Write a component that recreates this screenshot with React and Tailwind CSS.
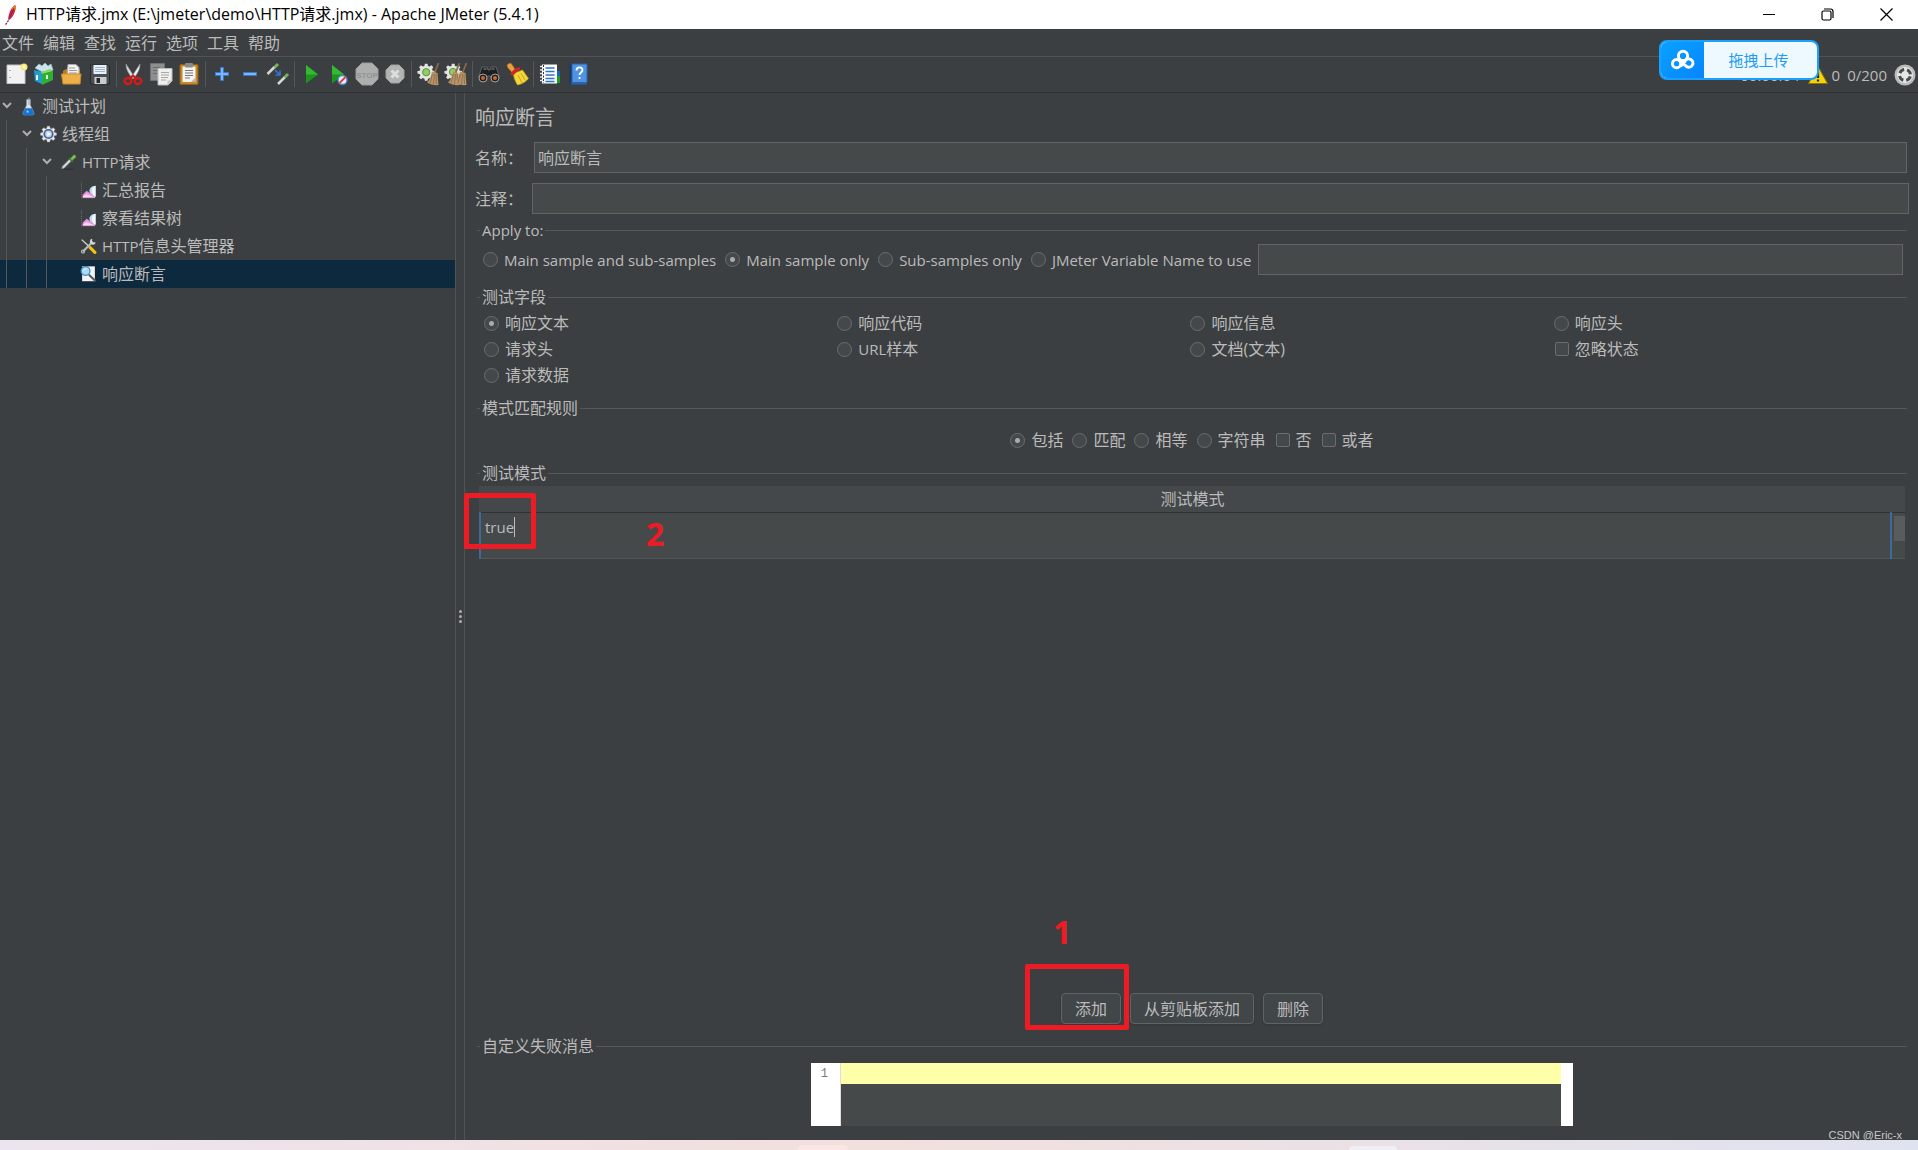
import React, { useState } from "react";

// Toolbar drawings, all on a 24x24 grid
const GEAR =
  "M10.4 2h3.2l.5 2.6 1.9.8 2.2-1.5 2.2 2.3-1.5 2.1.8 1.9 2.6.5v2.8l-2.6.5-.8 1.9 1.5 2.2-2.2 2.2-2.2-1.5-1.9.8-.5 2.6h-3.2l-.5-2.6-1.9-.8-2.2 1.5-2.2-2.2 1.5-2.2-.8-1.9-2.6-.5v-2.8l2.6-.5.8-1.9-1.5-2.1 2.2-2.3L8 5.400l1.900-.8z";

const Broom = ({ x = 0 }) => (
  <g transform={`translate(${x} 0)`}>
    <path d="M20.500 1l-4 10" stroke="#8a6a48" strokeWidth="1.800" />
    <path d="M14 9.500l5.500 1.500 1 12c-4 .5-8.500-.5-11.500-2.500 3-3 4-6.500 5-11z" fill="#b99468" />
    <path d="M14.500 12l-2.500 9M16.500 12l-1 10.500M18 12l.5 10" stroke="#8a6844" strokeWidth=".8" />
  </g>
);

const Pipette = ({ size = 24 }) => (
  <svg width={size} height={size} viewBox="0 0 24 24" fill="none">
    <ellipse cx="10" cy="22" rx="9" ry="1" fill="#2c2e30" />
    <path d="M2.500 21.500l1-3.500L14 7.500l2.500 2.500L6 20.500z" fill="#d7dad7" stroke="#8b908c" />
    <path d="M12 6l6 6" stroke="#3c6e34" strokeWidth="2" />
    <path d="M14.500 7.500l4.500-5c1.800-1.500 4.500 1 3 3l-5 4.500z" fill="#7cc25c" stroke="#4f8f3c" />
  </svg>
);

const icons = {
  new: (
    <>
      <path d="M3 3h18v18.500H3z" fill="#f2f2f2" stroke="#c4c4c4" />
      <path d="M6 8v1M6 15v1" stroke="#999" strokeWidth="1.500" />
      <circle cx="20" cy="5" r="3.500" fill="#f5e878" />
      <circle cx="20" cy="5" r="1.500" fill="#fffbd0" />
    </>
  ),
  templates: (
    <>
      <path d="M3 6l4-4 3 2 3-3 3 3 3-2 2 6-9 3z" fill="#cfe3ea" stroke="#8fb2c0" />
      <path d="M2 8l8 2v12l-7-3z" fill="#1e9fd0" />
      <path d="M5 13v5" stroke="#dff2fa" strokeWidth="2" />
      <path d="M10 12l11-3v9l-11 5z" fill="#2fae35" />
      <path d="M10 12l11-3-3-2-9 3z" fill="#7ddc5c" />
      <path d="M15 13v4" stroke="#d6ffd0" strokeWidth="2" />
    </>
  ),
  open: (
    <>
      <path d="M3 9l3-2h14v14H3z" fill="#b97c1c" />
      <path d="M8 2.500h8l3 3V14H7z" fill="#f2f2f2" stroke="#aaa" />
      <path d="M9 6h6M9 8.500h8M9 11h8" stroke="#999" />
      <path d="M1.500 12h19.500l-1 10H3z" fill="#eeb14a" stroke="#c98d28" />
    </>
  ),
  save: (
    <>
      <path d="M2.500 3h18l1 1v18h-19z" fill="#4b4e54" stroke="#26282b" />
      <path d="M5.500 3h13v9h-13z" fill="#e8f0f8" />
      <path d="M7 5.500h10M7 7.500h10M7 9.500h10" stroke="#9fb6cd" />
      <path d="M6.500 15h12v7h-12z" fill="#c9cccf" />
      <path d="M8.500 16h3.500v5H8.500z" fill="#26282b" />
    </>
  ),
  cut: (
    <>
      <path d="M5 2l8.500 13-2 1.500C8 12 5 8 5 2z" fill="#d8dadc" stroke="#909396" strokeWidth=".6" />
      <path d="M19 2l-8.500 13 2 1.500C16 12 19 8 19 2z" fill="#f0f1f2" stroke="#909396" strokeWidth=".6" />
      <ellipse cx="7" cy="19" rx="3.300" ry="3" stroke="#d41a1a" strokeWidth="2.400" />
      <ellipse cx="17" cy="19" rx="3.300" ry="3" stroke="#d41a1a" strokeWidth="2.400" />
      <path d="M9 16.500l3-3 3 3" stroke="#d41a1a" strokeWidth="2.200" />
    </>
  ),
  copy: (
    <>
      <path d="M1.500 1.500h14v17h-14z" fill="#8c8f90" stroke="#6e7172" />
      <path d="M4 5.500h7M4 8.500h5M4 11.500h4" stroke="#6a6d6e" />
      <path d="M9 6.500h14V19l-4 4H9z" fill="#efefee" stroke="#bbb" />
      <path d="M12 10.500h8M12 13h8M12 15.500h7M12 18h5" stroke="#a7a7a7" />
      <path d="M23 18.500h-4.500V23z" fill="#c5c5c5" />
    </>
  ),
  paste: (
    <>
      <rect x="3" y="2.500" width="18" height="20" rx="1" fill="#c98828" stroke="#8f5e14" />
      <path d="M5.500 4.500h13V20h-13z" fill="#f3f3f2" />
      <rect x="8" y="1" width="8" height="4.500" rx="1" fill="#8a8c88" />
      <path d="M8 8.500h8M8 11h8M8 13.500h8M8 16h5" stroke="#777" />
      <path d="M18.500 15.500V20H14z" fill="#b5b5b5" />
    </>
  ),
  plus: <path d="M10.500 5.500h3v5h5v3h-5v5h-3v-5h-5v-3h5z" fill="#7db4f5" stroke="#3a78cc" />,
  minus: <path d="M5.500 10.500h13v3h-13z" fill="#7db4f5" stroke="#3a78cc" />,
  toggle: (
    <>
      <path d="M1.500 12l7-7" stroke="#d4d7d4" strokeWidth="2.500" />
      <path d="M8.500 5.500L12 2" stroke="#78b060" strokeWidth="3" />
      <path d="M12 22l7-7" stroke="#d4d7d4" strokeWidth="2.500" />
      <path d="M18.500 15.500L22 12" stroke="#78b060" strokeWidth="3" />
      <path d="M9 8l4.500 4.500M14 8.500V13H9.500" stroke="#2f78d8" strokeWidth="1.500" />
    </>
  ),
  start: (
    <>
      <path d="M7 3l12 9.500L7 21.500z" fill="#1a961a" />
      <path d="M7 3l12 9.500H7z" fill="#35b835" />
    </>
  ),
  startNoPause: (
    <>
      <path d="M5 3l12 9.500L5 21.500z" fill="#1a961a" />
      <path d="M5 3l12 9.500H5z" fill="#35b835" />
      <circle cx="15.500" cy="18" r="4.500" fill="#e8eef8" stroke="#4b83cc" strokeWidth="1.300" />
      <path d="M12.500 21l6-6" stroke="#dd3c3c" strokeWidth="1.800" />
    </>
  ),
  stop: (
    <>
      <path d="M7 1h10l6 6v10l-6 6H7l-6-6V7z" fill="#adafaf" stroke="#9a9c9c" />
      <text x="12" y="15.500" textAnchor="middle" fontSize="8" fontWeight="bold" fill="#929494" fontFamily="Liberation Sans, sans-serif">
        STOP
      </text>
    </>
  ),
  shutdown: (
    <>
      <path d="M8 3h8l5 5v8l-5 5H8l-5-5V8z" fill="#b2b4b4" stroke="#9fa1a1" />
      <path d="M8.500 8.500l7 7M15.500 8.500l-7 7" stroke="#dcdede" strokeWidth="3" />
    </>
  ),
  clear: (
    <>
      <path d={GEAR} fill="#e3e5e3" transform="translate(0 0) scale(.85)" />
      <circle cx="10.200" cy="10.200" r="3.600" fill="#8fd05a" stroke="#5f8c46" />
      <Broom x={2} />
    </>
  ),
  clearAll: (
    <>
      <path d={GEAR} fill="#e3e5e3" transform="translate(-1 0) scale(.85)" />
      <circle cx="9" cy="10" r="3.600" fill="#8fd05a" stroke="#5f8c46" />
      <Broom x={-5} />
      <Broom x={2} />
    </>
  ),
  search: (
    <>
      <path d="M5 5h5l1 3h2l1-3h5l3.500 10-4 4h-4l-1-5h-3l-1 5h-4l-4-4z" fill="#1e1f20" stroke="#6a6d70" strokeWidth=".8" />
      <path d="M6.500 7h3M14.500 7h3" stroke="#8e9194" />
      <circle cx="6" cy="16" r="4" fill="#2b1c14" stroke="#a0a3a6" />
      <circle cx="6" cy="16" r="2" fill="#c36a35" />
      <circle cx="18" cy="16" r="4" fill="#2b1c14" stroke="#a0a3a6" />
      <circle cx="18" cy="16" r="2" fill="#c36a35" />
    </>
  ),
  resetSearch: (
    <>
      <path d="M2 3.500C3 1 6 .5 7 2.500l4 6-3.500 2.500-4.500-5z" fill="#e8a13c" stroke="#a8661a" strokeWidth=".7" />
      <path d="M11 10.500l6.500-2.500 6 8.500c-2.500 3-6 5.500-11 6.500-2-3-3.500-7-4-10z" fill="#f5d636" stroke="#c39c18" strokeWidth=".7" />
      <path d="M13 13l4 8M16 11.500l4.500 7" stroke="#c9a420" />
      <path d="M6.500 13c2-3.500 5-6 8.500-6.500" stroke="#d62222" strokeWidth="3.200" />
    </>
  ),
  log: (
    <>
      <path d="M18 9h4v5h-4z" fill="#1462c9" />
      <path d="M18 14h4v7h-4z" fill="#1aa01a" />
      <path d="M4 2.500h15v19H4z" fill="#fcfcfc" />
      <path d="M7.500 6h9M7.500 9.500h9M7.500 13h9M7.500 16.500h9M7.500 19.500h9" stroke="#2d74c8" strokeWidth="1.300" />
      <path d="M2 4.500h4M2 8h4M2 11.500h4M2 15h4M2 18.500h4" stroke="#e6e6e6" strokeWidth="1.500" />
      <path d="M5.500 3v18" stroke="#333" strokeDasharray="2 1.500" />
    </>
  ),
  help: (
    <>
      <path d="M3.500 2.500h3v20h-3z" fill="#16386e" />
      <path d="M6 2h15v18.500H6z" fill="#4f93e3" stroke="#2c62ad" />
      <path d="M5 20.500h15.500v2H5z" fill="#2c62ad" />
      <path d="M10.500 8.500c0-4 6-4 6-.5 0 2.500-3 2.500-3 5M13.500 15v2" stroke="#fff" strokeWidth="1.800" />
    </>
  )
};

const toolGroups = [
  [["new", "新建"], ["templates", "模板"], ["open", "打开"], ["save", "保存"]],
  [["cut", "剪切"], ["copy", "复制"], ["paste", "粘贴"]],
  [["plus", "展开"], ["minus", "折叠"], ["toggle", "切换"]],
  [["start", "启动"], ["startNoPause", "不停顿开始"], ["stop", "停止"], ["shutdown", "关闭"]],
  [["clear", "清除"], ["clearAll", "清除全部"]],
  [["search", "查找"], ["resetSearch", "重置搜索"]],
  [["log", "函数助手"], ["help", "帮助"]]
];

const Flask = () => (
  <svg width="18" height="20" viewBox="0 0 18 20" fill="none">
    <path d="M7 3h4v6l4 9c0 1-1 1.500-2 1.500H5c-1 0-2-.5-2-1.500l4-9z" fill="#dce6ee" stroke="#8d9aa5" strokeWidth=".7" />
    <path d="M5.500 12.500h7l2.500 5.500c0 1-1 1.500-2 1.500H5c-1 0-2-.5-2-1.500z" fill="#1673d8" />
    <path d="M9.500 1v8" stroke="#9aa4ac" />
    <circle cx="8" cy="16" r="1.200" fill="#9ad0ff" />
  </svg>
);

const ThreadGear = () => (
  <svg width="20" height="20" viewBox="1 1 22 22" fill="none">
    <path d={GEAR} fill="#e9e9ea" stroke="#b4b6b8" strokeWidth=".6" />
    <circle cx="12" cy="12" r="5.500" fill="#bcd0ee" stroke="#3f5f98" strokeWidth="2.200" />
    <path d="M10.500 9l5 3-5 3z" fill="#fff" />
  </svg>
);

const Chart = () => (
  <svg width="18" height="18" viewBox="0 0 18 18" fill="none">
    <path d="M1.500 1v16M1 17.500h16" stroke="#74777a" strokeDasharray="1 1" />
    <path d="M10 10c0-3 2-5 6.500-5.500v12H12z" fill="#b9dcf7" />
    <path d="M13 8c1-2 2-3 3.500-3.500V16c-3 0-4-4-3.500-8z" fill="#f4faff" />
    <path d="M3 17v-3l4-4 3 2 3 2 3 3z" fill="#ee9adf" stroke="#d87acb" strokeWidth=".5" />
    <path d="M3 17v-1.500l4-2 9 3.500z" fill="#ffd7f6" />
  </svg>
);

const Tools = () => (
  <svg width="20" height="20" viewBox="0 0 20 20" fill="none">
    <path d="M2 2.500l9 8.500" stroke="#d2d4d5" strokeWidth="1.600" />
    <path d="M12 12l5.500 5.500" stroke="#f1c40f" strokeWidth="3.600" strokeLinecap="round" />
    <path d="M3.500 16.500L15 5" stroke="#b9bcbd" strokeWidth="2.400" />
    <path d="M14.500 1.500a3.500 3.500 0 1 0 4 4l-2.500.5-2-2z" fill="#d2d4d5" />
    <circle cx="3.500" cy="16.500" r="1.800" stroke="#b9bcbd" strokeWidth="1.400" />
  </svg>
);

const Magnifier = () => (
  <svg width="20" height="20" viewBox="0 0 20 20" fill="none">
    <path d="M2.500 1h15v17.500h-15z" fill="#f4f4f4" />
    <path d="M10.500 11l8 7.500" stroke="#55585a" strokeWidth="2.400" />
    <circle cx="6.500" cy="6.500" r="5.200" fill="#a5dcf8" stroke="#3e86b5" strokeWidth="1.400" />
    <path d="M4 6c.5-1.500 2-2 3.500-2" stroke="#fff" />
  </svg>
);

const Http = () => <span className="text-[15px]">HTTP</span>;

const tree = [
  { depth: 0, open: true, icon: <Flask />, label: "测试计划" },
  { depth: 1, open: true, icon: <ThreadGear />, label: "线程组" },
  { depth: 2, open: true, icon: <Pipette size={20} />, label: <><Http />请求</> },
  { depth: 3, icon: <Chart />, label: "汇总报告" },
  { depth: 3, icon: <Chart />, label: "察看结果树" },
  { depth: 3, icon: <Tools />, label: <><Http />信息头管理器</> },
  { depth: 3, icon: <Magnifier />, label: "响应断言", selected: true }
];

function TitleBar() {
  return (
    <header className="flex h-[29px] items-center justify-between bg-white pl-[3px] text-black">
      <div className="flex items-center gap-[9px]">
        <svg width="14" height="22" viewBox="0 0 14 22" fill="none">
          <path d="M12 1c1.500 1 .5 6-1.500 10-1 2-3 4-5 5.500C4.500 13 7 4 12 1z" fill="#d0253c" />
          <path d="M12 1c1.500 1 1 3 .3 5L8.500 5C9.500 3 10.500 2 12 1z" fill="#f08020" />
          <path d="M5.500 16.500L2 21.500" stroke="#6b2a7c" strokeWidth="1.300" strokeDasharray="2 1" />
          <path d="M11 4L6 15" stroke="#7a2668" />
        </svg>
        <h1 className="pb-[2px] text-base">HTTP请求.jmx (E:\jmeter\demo\HTTP请求.jmx) - Apache JMeter (5.4.1)</h1>
      </div>
      <div className="flex pr-[2px]">
        <button aria-label="最小化" className="flex h-[28px] w-[58px] items-center justify-center">
          <svg width="13" height="13" viewBox="0 0 13 13" stroke="#000"><path d="M0 6.500h12" /></svg>
        </button>
        <button aria-label="还原" className="flex h-[28px] w-[58px] items-center justify-center">
          <svg width="13" height="13" viewBox="0 0 13 13" fill="none" stroke="#000" strokeWidth="1.200">
            <rect x="1" y="3" width="9" height="9" rx="1.500" />
            <path d="M3 1h6.500c1.500 0 2.500 1 2.500 2.500V10" />
          </svg>
        </button>
        <button aria-label="关闭" className="flex h-[28px] w-[60px] items-center justify-center">
          <svg width="13" height="13" viewBox="0 0 13 13" fill="none" stroke="#000" strokeWidth="1.200">
            <path d="M.5.5l12 12M12.500.5l-12 12" />
          </svg>
        </button>
      </div>
    </header>
  );
}

function Toolbar() {
  return (
    <div className="relative flex h-9 items-center justify-between border-b border-[#2f3234] pl-[2px] pr-[2px]">
      <div className="flex items-center pb-[2px]">
        {toolGroups.map((group, i) => (
          <React.Fragment key={i}>
            {i > 0 && <span className="mx-[2px] h-[26px] w-px bg-[#555759]" />}
            {group.map(([name, label]) => (
              <button key={name} aria-label={label} className="flex h-8 w-7 items-center justify-center">
                <svg width="24" height="24" viewBox="0 0 24 24" fill="none">{icons[name]}</svg>
              </button>
            ))}
          </React.Fragment>
        ))}
      </div>
      <div className="flex items-center gap-[7px] text-[15px]">
        <span>00:00:04</span>
        <svg width="22" height="20" viewBox="0 0 22 20" fill="none">
          <path d="M11 1.500l9.500 17h-19z" fill="#f5d20a" stroke="#8a7608" />
          <path d="M11 7v6M11 14.500v2" stroke="#222" strokeWidth="2.200" />
        </svg>
        <span className="-ml-1">0</span>
        <span>0/200</span>
        <svg width="22" height="22" viewBox="0 0 22 22" fill="none">
          <circle cx="11" cy="11" r="10.500" fill="#b9bbbc" />
          <circle cx="11" cy="11" r="8" fill="#e4e5e5" />
          <circle cx="11" cy="11" r="5.500" stroke="#4a4c4d" strokeWidth="3" strokeDasharray="5.600 3.040" strokeDashoffset="-1.500" />
        </svg>
      </div>
      {/* Floating upload widget */}
      <button className="absolute right-[99px] -top-[17px] flex h-10 w-40 overflow-hidden rounded-lg border-2 border-[#1aa0ff] bg-[#eef8ff] text-[15px] text-[#1e9cf5]">
        <span className="flex h-full w-[43px] items-center justify-center bg-linear-to-br from-[#0ba2ff] to-[#0a84ff]">
          <svg width="26" height="22" viewBox="0 0 28 24" fill="none" stroke="#fff" strokeWidth="3.200">
            <circle cx="14" cy="7.500" r="5" />
            <circle cx="7" cy="16" r="4.500" />
            <path d="M10 12.500l8.500 7a4.500 4.500 0 1 0-2-6.500l-5 6" />
          </svg>
        </span>
        <span className="flex h-full flex-1 items-center justify-center pr-1">拖拽上传</span>
      </button>
    </div>
  );
}

function TreeRow({ node }) {
  return (
    <li className={`flex h-7 items-center ${node.selected ? "bg-[#0d293e]" : ""}`}>
      {Array.from({ length: node.depth }, (_, i) => (
        <span key={i} className="flex h-full w-5 shrink-0 pl-[6px]">
          <span className="w-px bg-[#55585a]" />
        </span>
      ))}
      <span className="flex w-5 shrink-0 pl-[2px]">
        {node.open && (
          <svg width="10" height="10" viewBox="0 0 10 10" fill="none" stroke="#adadad" strokeWidth="2">
            <path d="M1 2l4 4 4-4" />
          </svg>
        )}
      </span>
      <span className="flex w-[22px] shrink-0 justify-center pr-[5px]">{node.icon}</span>
      <span className="whitespace-nowrap">{node.label}</span>
    </li>
  );
}

function Radio({ name, value, selected, onSelect, children }) {
  return (
    <label className="flex items-center gap-[6px] whitespace-nowrap">
      <input
        type="radio"
        name={name}
        value={value}
        checked={selected === value}
        onChange={() => onSelect(value)}
        className="h-[15px] w-[15px] shrink-0 appearance-none rounded-full border border-[#6b6d6e] bg-[#43494a] checked:bg-[radial-gradient(circle,#aaaaaa_2px,#43494a_3px)]"
      />
      {children}
    </label>
  );
}

function Checkbox({ children }) {
  return (
    <label className="flex items-center gap-[6px] whitespace-nowrap">
      <input
        type="checkbox"
        className="ml-px h-[14px] w-[14px] shrink-0 appearance-none rounded-xs border border-[#6b6d6e] bg-[#43494a] checked:bg-[#aaaaaa]"
      />
      {children}
    </label>
  );
}

function Group({ title, className, children }) {
  return (
    <fieldset className={`border-t border-[#555759] ${className}`}>
      <legend className="ml-[3px] px-[2px] leading-[22px]">{title}</legend>
      {children}
    </fieldset>
  );
}

const inputClass = "h-[31px] min-w-0 flex-1 border border-[#646464] bg-[#45494a] px-[3px] pb-px outline-none";
const buttonClass = "h-[31px] rounded-sm border border-[#616465] bg-[#414648] px-[13px] shadow-sm";

export default function App() {
  const [name, setName] = useState("响应断言");
  const [scope, setScope] = useState("main");
  const [field, setField] = useState("text");
  const [rule, setRule] = useState("contains");
  const [pattern, setPattern] = useState("true");

  return (
    <div className="flex min-h-screen flex-col bg-[#3c3f41] font-['Open_Sans','Noto_Sans_CJK_SC',sans-serif] text-base leading-[22px] text-[#bbbbbb]">
      <TitleBar />
      <nav className="flex h-[28px] items-center gap-[9px] border-b border-[#515355] pl-[2px]">
        {["文件", "编辑", "查找", "运行", "选项", "工具", "帮助"].map((item) => (
          <button key={item}>{item}</button>
        ))}
      </nav>
      <Toolbar />

      <main className="flex flex-1">
        <aside className="w-[456px] shrink-0 border-r border-[#515355]">
          <ul className="-mt-px">
            {tree.map((node, i) => (
              <TreeRow key={i} node={node} />
            ))}
          </ul>
        </aside>
        <div className="flex w-[9px] shrink-0 flex-col items-center justify-center gap-[2px] border-r border-[#515355]">
          <span className="h-[3px] w-[3px] rounded-full bg-[#adadad]" />
          <span className="h-[3px] w-[3px] rounded-full bg-[#adadad]" />
          <span className="h-[3px] w-[3px] rounded-full bg-[#adadad]" />
        </div>

        <section className="flex min-w-0 flex-1 flex-col pb-[14px] pl-[10px] pr-[9px] pt-[11px]">
          <h2 className="text-xl leading-[28px]">响应断言</h2>
          <div className="mt-[10px] flex items-center pr-[2px]">
            <label htmlFor="name" className="w-[59px]">名称：</label>
            <input id="name" value={name} onChange={(e) => setName(e.target.value)} className={inputClass} />
          </div>
          <div className="mt-[10px] flex items-center">
            <label htmlFor="comment" className="w-[57px]">注释：</label>
            <input id="comment" className={inputClass} />
          </div>

          <div className="flex flex-1 flex-col pl-[2px] pr-[2px] pt-[5px]">
            <Group title={<span className="text-[15px]">Apply to:</span>} className="pb-[11px] pt-[3px]">
              <div className="flex items-center gap-[9px] pl-[6px] pr-1 text-[15px]">
                <Radio name="scope" value="all" selected={scope} onSelect={setScope}>Main sample and sub-samples</Radio>
                <Radio name="scope" value="main" selected={scope} onSelect={setScope}>Main sample only</Radio>
                <Radio name="scope" value="sub" selected={scope} onSelect={setScope}>Sub-samples only</Radio>
                <div className="flex flex-1 items-center gap-[7px]">
                  <Radio name="scope" value="variable" selected={scope} onSelect={setScope}>JMeter Variable Name to use</Radio>
                  <input aria-label="JMeter Variable Name" className={inputClass} />
                </div>
              </div>
            </Group>

            <Group title="测试字段" className="pb-[9px] pt-[2px]">
              <div className="grid auto-rows-[26px] grid-cols-[353fr_353fr_363fr_353fr] pl-[7px]">
                <Radio name="field" value="text" selected={field} onSelect={setField}>响应文本</Radio>
                <Radio name="field" value="code" selected={field} onSelect={setField}>响应代码</Radio>
                <Radio name="field" value="message" selected={field} onSelect={setField}>响应信息</Radio>
                <Radio name="field" value="headers" selected={field} onSelect={setField}>响应头</Radio>
                <Radio name="field" value="requestHeaders" selected={field} onSelect={setField}>请求头</Radio>
                <Radio name="field" value="url" selected={field} onSelect={setField}><span><span className="text-[15px]">URL</span>样本</span></Radio>
                <Radio name="field" value="document" selected={field} onSelect={setField}>文档(文本)</Radio>
                <Checkbox>忽略状态</Checkbox>
                <Radio name="field" value="requestData" selected={field} onSelect={setField}>请求数据</Radio>
              </div>
            </Group>

            <Group title="模式匹配规则" className="pb-[11px] pt-[10px]">
              <div className="flex justify-center gap-[9px]">
                <Radio name="rule" value="contains" selected={rule} onSelect={setRule}>包括</Radio>
                <Radio name="rule" value="matches" selected={rule} onSelect={setRule}>匹配</Radio>
                <Radio name="rule" value="equals" selected={rule} onSelect={setRule}>相等</Radio>
                <Radio name="rule" value="substring" selected={rule} onSelect={setRule}>字符串</Radio>
                <Checkbox>否</Checkbox>
                <Checkbox>或者</Checkbox>
              </div>
            </Group>

            <Group title="测试模式" className="flex flex-1 flex-col pb-[11px] pt-[2px]">
              <div className="relative pl-[2px] pr-[2px]">
                <table className="w-full border-b border-[#515658] bg-[#45494a]">
                  <thead>
                    <tr className="h-[26px] border-b border-[#2f3234] bg-[#44484a]">
                      <th colSpan="2" className="p-0 font-normal">测试模式</th>
                    </tr>
                  </thead>
                  <tbody>
                    <tr className="h-[46px]">
                      <td className="border-x-2 border-[#3d6a9b] p-0 pb-4 pl-1">
                        <div className="flex items-center">
                          <input
                            aria-label="测试模式"
                            value={pattern}
                            onChange={(e) => setPattern(e.target.value)}
                            className="field-sizing-content text-[15px] outline-none"
                          />
                          <span className="h-5 w-px bg-[#bbbbbb]" />
                        </div>
                      </td>
                      <td className="w-[14px] p-0 pl-[2px] align-top">
                        <div className="mt-[3px] h-[25px] bg-[#595b5d]" />
                      </td>
                    </tr>
                  </tbody>
                </table>
                {/* Step 2 marker */}
                <div className="absolute -left-[13px] top-[7px] h-[56px] w-[72px] rounded-xs border-[5px] border-[#ed1c24]" />
                <span className="absolute left-[169px] top-[31px] text-[32px] font-bold leading-[34px] text-[#ed1c24]">2</span>
              </div>
              <div className="mt-auto flex justify-center gap-[9px]">
                <div className="relative">
                  <button className={buttonClass}>添加</button>
                  {/* Step 1 marker */}
                  <div className="absolute -left-9 -top-[29px] h-[66px] w-[104px] rounded-xs border-[5px] border-[#ed1c24]" />
                  <span className="absolute -left-[8px] -top-[78px] text-[32px] font-bold leading-[34px] text-[#ed1c24]">1</span>
                </div>
                <button className={buttonClass}>从剪贴板添加</button>
                <button className={buttonClass}>删除</button>
              </div>
            </Group>

            <Group title="自定义失败消息" className="pt-[6px]">
              <div className="mx-auto flex h-[63px] w-[762px] border-r-[12px] border-white">
                <div className="w-[30px] border-r border-[#dddddd] bg-white pr-3 text-right font-['Liberation_Mono',monospace] text-xs leading-[22px] text-[#787878]">1</div>
                <textarea
                  aria-label="自定义失败消息"
                  className="h-full min-w-0 flex-1 resize-none bg-[linear-gradient(#ffffaa_21px,#45494a_21px)] px-1 text-black outline-none"
                />
              </div>
            </Group>
          </div>
        </section>
      </main>

      {/* Desktop strip under the window */}
      <footer className="relative flex h-[10px] items-end bg-linear-to-r from-[#ece4ee] via-[#f3dfdc] via-45% to-[#dfe3f0]">
        <span className="absolute bottom-0 left-[798px] h-[5px] w-[50px] rounded-t bg-[#fbe4e6]" />
        <span className="absolute bottom-0 left-[1349px] h-[4px] w-12 rounded-t bg-[#f1eff6]" />
        <small className="absolute bottom-[7px] right-4 text-[11px] leading-4 text-[#c8c8c8] font-['Liberation_Sans',sans-serif]">CSDN @Eric-x</small>
      </footer>
    </div>
  );
}
